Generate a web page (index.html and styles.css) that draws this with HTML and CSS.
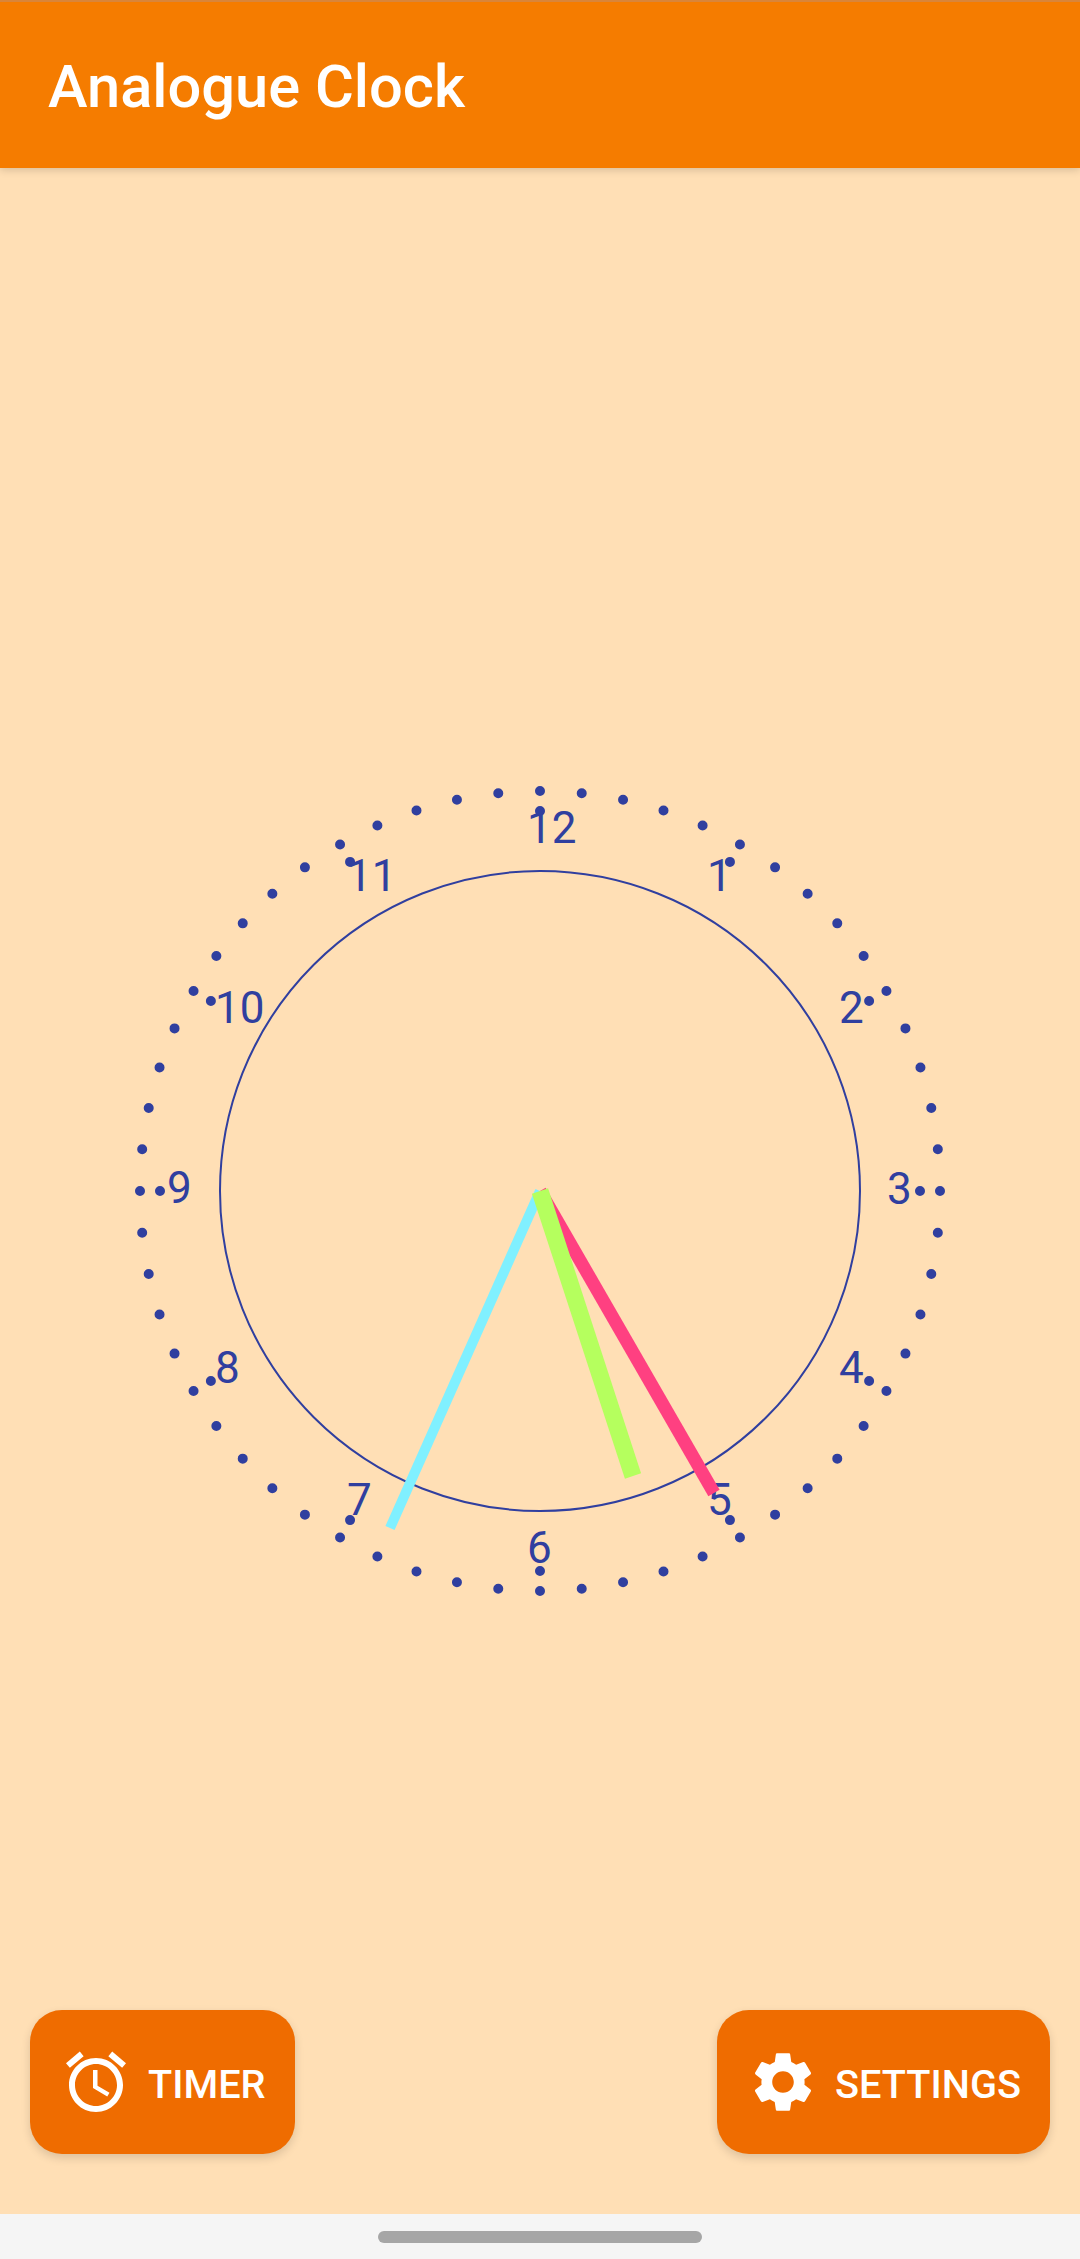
FILE: index.html
```html
<!DOCTYPE html>
<html lang="en">
<head>
<meta charset="utf-8">
<title>Analogue Clock</title>
<link rel="stylesheet" href="styles.css">
</head>
<body>
<div class="app">
  <header class="appbar"><h1 class="title">Analogue Clock</h1></header>
  <main class="stage">
    <svg class="clock" viewBox="-420 -420 840 840" width="840" height="840" role="img" aria-label="Clock face">
      <circle class="rim" r="320"/>
      <circle class="ticks minute" r="400" pathLength="60"/>
      <circle class="ticks hour" r="380" pathLength="12"/>
      <g class="numerals">
        <text x="167" y="-300">1</text>
        <text x="299" y="-168">2</text>
        <text x="347" y="13">3</text>
        <text x="299" y="192">4</text>
        <text x="167" y="324">5</text>
        <text x="-13" y="372">6</text>
        <text x="-193" y="324">7</text>
        <text x="-325" y="192">8</text>
        <text x="-373" y="12">9</text>
        <text x="-325" y="-168">10</text>
        <text x="-193" y="-300">11</text>
        <text x="-13" y="-348">12</text>
      </g>
      <line class="hand second" x1="0" y1="0" x2="174" y2="302"/>
      <line class="hand minute-hand" x1="0" y1="0" x2="-150" y2="337"/>
      <line class="hand hour-hand" x1="0" y1="0" x2="93" y2="285"/>
    </svg>
    <div class="actions">
      <button class="action" type="button">
        <svg class="icon" viewBox="0 0 24 24"><path d="M22 5.72l-4.6-3.86-1.29 1.53 4.6 3.86L22 5.72zM7.88 3.39L6.6 1.86 2 5.71l1.29 1.53 4.59-3.85zM12.5 8H11v6l4.75 2.85.75-1.23-4-2.37V8zM12 4c-4.97 0-9 4.03-9 9s4.03 9 9 9 9-4.03 9-9-4.03-9-9-9zm0 16c-3.87 0-7-3.13-7-7s3.13-7 7-7 7 3.13 7 7-3.13 7-7 7z"/></svg>
        <span class="label">TIMER</span>
      </button>
      <button class="action" type="button">
        <svg class="icon" viewBox="0 0 24 24"><path d="M19.14 12.94c.04-.3.06-.61.06-.94 0-.32-.02-.64-.07-.94l2.03-1.58c.18-.14.23-.41.12-.61l-1.92-3.32c-.12-.22-.37-.29-.59-.22l-2.39.96c-.5-.38-1.03-.7-1.62-.94l-.36-2.54c-.04-.24-.24-.41-.48-.41h-3.84c-.24 0-.43.17-.47.41l-.36 2.54c-.59.24-1.13.57-1.62.94l-2.39-.96c-.22-.08-.47 0-.59.22L2.74 8.87c-.12.21-.08.47.12.61l2.03 1.58c-.05.3-.09.63-.09.94s.02.64.07.94l-2.03 1.58c-.18.14-.23.41-.12.61l1.92 3.32c.12.22.37.29.59.22l2.39-.96c.5.38 1.03.7 1.62.94l.36 2.54c.05.24.24.41.48.41h3.84c.24 0 .44-.17.47-.41l.36-2.54c.59-.24 1.13-.56 1.62-.94l2.39.96c.22.08.47 0 .59-.22l1.92-3.32c.12-.22.07-.47-.12-.61l-2.01-1.58zM12 15.6c-1.98 0-3.6-1.62-3.6-3.6s1.62-3.6 3.6-3.6 3.6 1.62 3.6 3.6-1.62 3.6-3.6 3.6z"/></svg>
        <span class="label">SETTINGS</span>
      </button>
    </div>
  </main>
  <footer class="navbar"><div class="pill"></div></footer>
</div>
</body>
</html>
```
FILE: styles.css
```css
* { box-sizing: border-box; }
html, body { margin: 0; padding: 0; }
body { font-family: Roboto, "Noto Sans", sans-serif; background: #f5f5f5; }
.app { width: 1080px; height: 2259px; display: flex; flex-direction: column; overflow: hidden; }
.appbar {
  height: 168px; flex: none; display: flex; align-items: center; padding: 6px 48px 0;
  background: #f57c00; border-top: 2px solid #d9853a;
  box-shadow: 0 2px 8px rgba(0,0,0,.16); position: relative; z-index: 1;
}
.title { margin: 0; font-size: 59.6px; font-weight: 500; color: #fff; line-height: 1; }
.stage { flex: 1; min-height: 0; display: grid; background: #ffdfb5; }
.clock { grid-area: 1 / 1; place-self: center; display: block; overflow: visible; }
.rim { fill: none; stroke: #303f9f; stroke-width: 2; }
.ticks { fill: none; stroke: #303f9f; stroke-width: 10; stroke-linecap: round; stroke-dasharray: 0 1; }
.numerals text { font-family: Roboto, sans-serif; font-size: 44px; fill: #303f9f; }
.hand { stroke-linecap: butt; }
.second { stroke: #ff4081; stroke-width: 13; }
.minute-hand { stroke: #80f0ff; stroke-width: 10; }
.hour-hand { stroke: #b5ff5e; stroke-width: 17; }
.actions { grid-area: 1 / 1; align-self: end; display: flex; justify-content: space-between; padding: 0 30px 60px; }
.action {
  height: 144px; display: flex; align-items: center; gap: 16px; padding: 0 29px 0 30px; border: 0; border-radius: 32px;
  background: #ef6c00; color: #fff; font-family: Roboto, sans-serif; font-size: 39.7px; font-weight: 500;
  box-shadow: 0 4px 10px rgba(0,0,0,.14);
}
.label { padding-top: 4px; }
.icon { width: 72px; height: 72px; fill: #fff; flex: none; }
.navbar { height: 45px; flex: none; display: flex; align-items: center; justify-content: center; background: #f5f5f5; }
.pill { width: 324px; height: 12px; border-radius: 6px; background: #a6a6a6; }
```
